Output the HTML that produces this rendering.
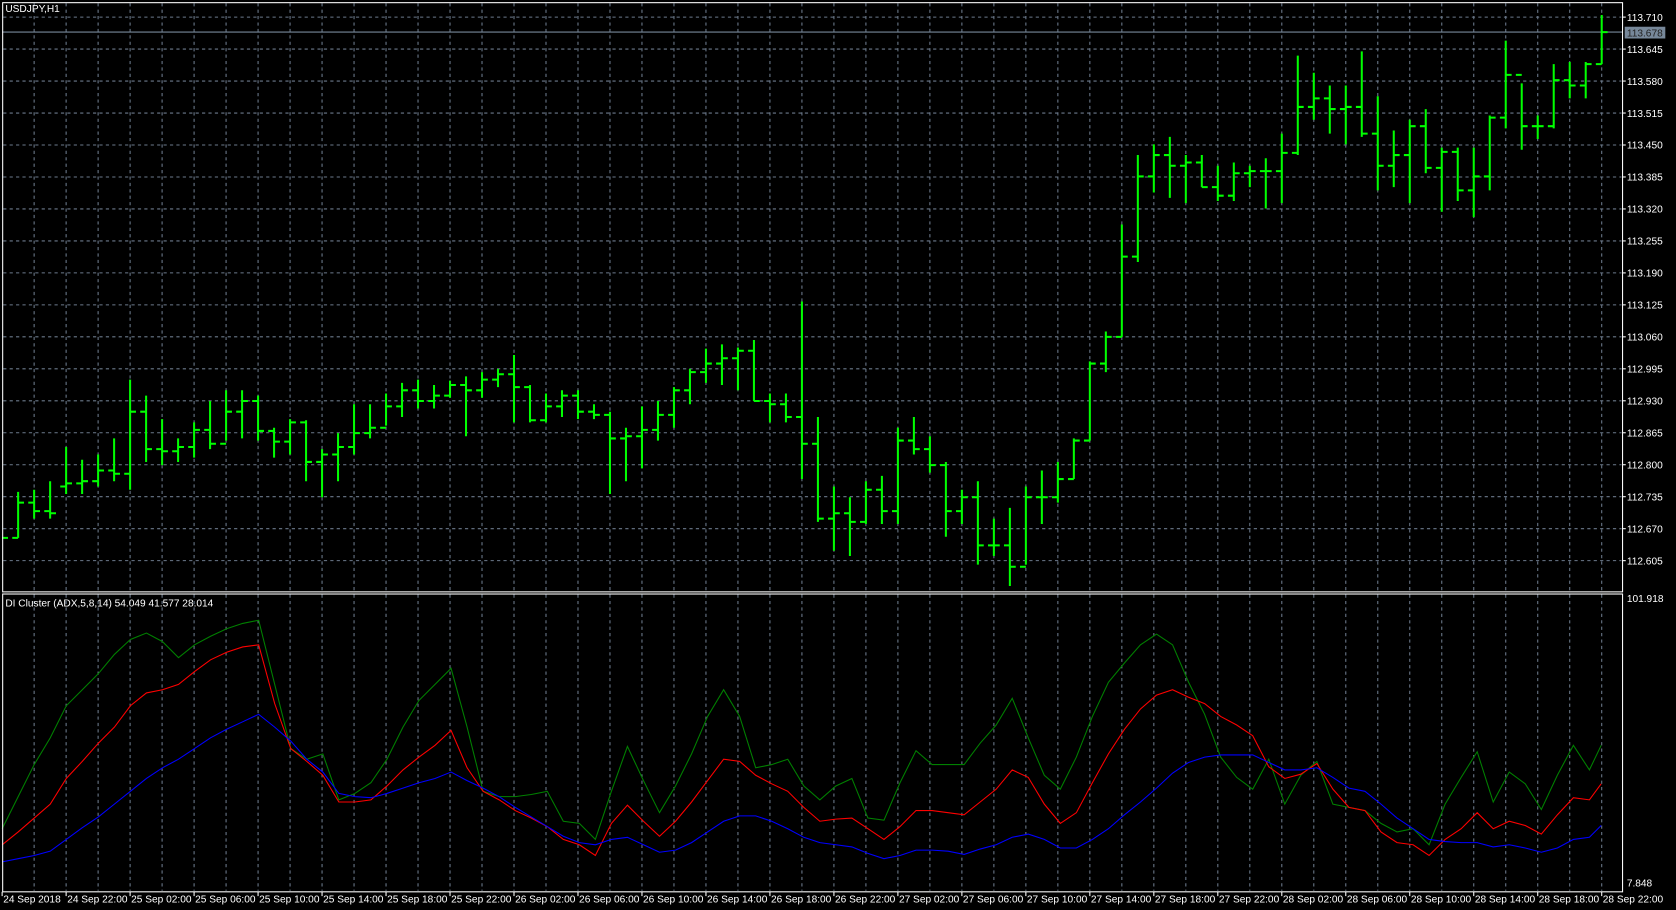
<!DOCTYPE html>
<html><head><meta charset="utf-8"><style>
html,body{margin:0;padding:0;background:#000;overflow:hidden}
svg{display:block}
text{font-family:"Liberation Sans",sans-serif;font-size:9.5px;fill:#fff}
</style></head><body>
<svg id="s" width="1676" height="910" viewBox="0 0 1568 851" preserveAspectRatio="none" xmlns="http://www.w3.org/2000/svg">
<rect width="1568" height="851" fill="#000"/>
<g id="grid" stroke="#6c7a8c" stroke-width="1" stroke-dasharray="3,3"></g>
<line x1="2" y1="30" x2="1518" y2="30" stroke="#77889a" stroke-width="1"/>
<g id="bars" stroke="#00ff00" stroke-width="1.9" fill="none"></g>
<polyline id="pg" fill="none" stroke="#008000" stroke-width="1"/>
<polyline id="pr" fill="none" stroke="#ff0000" stroke-width="1"/>
<polyline id="pb" fill="none" stroke="#0000ff" stroke-width="1"/>
<g stroke="#fff" stroke-width="1" fill="none">
<rect x="2.5" y="2.5" width="1515.5" height="551"/>
<rect x="2.5" y="555.5" width="1515.5" height="278.5"/>
</g>
<g id="labels"></g>
<text x="5" y="11">USDJPY,H1</text>
<text x="5" y="567">DI Cluster (ADX,5,8,14) 54.049 41.577 28.014</text>
<rect x="1520" y="25" width="38" height="11" fill="#77889a"/>
<text x="1522" y="34" fill="#000" style="fill:#222">113.678</text>
<text x="1522" y="563">101.918</text>
<text x="1522" y="829">7.848</text>
</svg>
<script>
var NS="http://www.w3.org/2000/svg";
function el(p,t,a,txt){var e=document.createElementNS(NS,t);for(var k in a)e.setAttribute(k,a[k]);if(txt)e.textContent=txt;p.appendChild(e);return e;}
var g=document.getElementById('grid'),L=document.getElementById('labels'),B=document.getElementById('bars');
var ps=[];for(var i=0;i<18;i++){var y=16+i*29.9;var p=(113.710-i*0.065).toFixed(3);
el(g,'line',{x1:3,y1:y,x2:1517,y2:y});
el(L,'line',{x1:1518,y1:y,x2:1521,y2:y,stroke:'#fff'});
el(L,'text',{x:1522,y:y+3.5},p);}
for(var k=1;k<51;k++){var x=2+k*29.93;el(g,'line',{x1:x,y1:3,x2:x,y2:553});el(g,'line',{x1:x,y1:556,x2:x,y2:833});}
var tl=["24 Sep 2018","24 Sep 22:00","25 Sep 02:00","25 Sep 06:00","25 Sep 10:00","25 Sep 14:00","25 Sep 18:00","25 Sep 22:00","26 Sep 02:00","26 Sep 06:00","26 Sep 10:00","26 Sep 14:00","26 Sep 18:00","26 Sep 22:00","27 Sep 02:00","27 Sep 06:00","27 Sep 10:00","27 Sep 14:00","27 Sep 18:00","27 Sep 22:00","28 Sep 02:00","28 Sep 06:00","28 Sep 10:00","28 Sep 14:00","28 Sep 18:00","28 Sep 22:00"];
for(var j=0;j<tl.length;j++){var x=(j==0?2:2+(j*4)*14.96-(j==1?0:0));if(j>0)x=2+(j*4)*14.965;el(L,'line',{x1:x,y1:834,x2:x,y2:838,stroke:'#fff'});el(L,'text',{x:x+1,y:844},tl[j]);}
var d=[[503,503,503,503],[460,503,503,470],[458,485,470,478],[450,485,478,480],[418,462,455,452],[430,462,452,450],[425,455,450,440],[410,450,440,443],[355,458,443,385],[370,432,385,420],[392,435,420,422],[410,432,422,418],[395,428,418,402],[375,420,402,415],[365,412,415,385],[365,410,385,375],[370,412,375,403],[400,428,403,413],[392,425,413,395],[393,450,395,432],[420,465,432,425],[405,450,425,418],[378,425,418,405],[378,410,405,400],[368,398,400,380],[358,390,380,365],[355,382,365,375],[360,382,375,370],[356,372,370,360],[352,408,360,365],[348,372,365,355],[345,362,355,350],[332,395,350,362],[360,395,362,393],[368,395,393,380],[365,390,380,370],[365,392,370,385],[378,392,385,388],[385,462,388,410],[400,450,410,408],[380,438,408,402],[375,412,402,388],[362,400,388,365],[345,378,365,348],[326,358,348,340],[322,360,340,335],[325,365,335,328],[318,375,328,375],[368,395,375,378],[368,395,378,390],[282,448,390,415],[390,488,415,485],[455,515,485,480],[465,520,480,488],[450,490,488,458],[445,490,458,478],[400,490,478,412],[390,425,412,420],[408,442,420,435],[432,502,435,478],[458,490,478,465],[450,528,465,510],[485,520,510,510],[475,548,510,530],[455,528,530,465],[440,490,465,465],[432,470,465,448],[410,448,448,412],[338,412,412,340],[310,348,340,315],[210,315,315,240],[145,245,240,165],[135,180,165,145],[128,185,145,155],[145,190,155,152],[145,175,152,175],[155,188,175,183],[152,188,183,162],[155,175,162,160],[148,195,160,160],[125,190,160,143],[52,145,143,100],[68,112,100,92],[80,125,92,102],[80,135,102,100],[48,128,100,125],[90,178,125,155],[122,175,155,145],[112,190,145,118],[102,162,118,157],[138,198,157,142],[138,188,142,178],[138,203,178,165],[108,178,165,110],[38,120,110,70],[78,140,70,118],[108,130,118,118],[60,120,118,75],[58,92,75,80],[58,92,80,60],[14,60,60,30]];
var path="";for(var i=0;i<d.length;i++){var x=2+i*14.965,b=d[i];if(i>0)path+="M"+x+" "+b[0]+"V"+b[1];path+="M"+Math.max(3,x-5.5)+" "+b[2]+"H"+x+"M"+x+" "+b[3]+"H"+Math.min(1517,x+5.5);}
el(B,'path',{d:path});
function pl(id,a){var s="";for(var i=0;i<a.length;i+=2)s+=a[i]+","+a[i+1]+" ";document.getElementById(id).setAttribute('points',s);}
pl('pg',[2,775,17,745,32,715,47,690,62,660,77,645,92,630,107,612,122,598,137,592,152,600,167,615,182,603,197,595,212,588,227,583,242,580,257,640,272,700,287,710,302,705,317,748,332,742,347,732,362,710,377,680,392,655,407,640,422,625,437,680,452,740,467,745,482,745,497,743,512,740,527,768,542,770,557,785,572,740,587,698,602,730,617,760,632,735,647,705,662,670,677,645,692,670,707,718,722,715,737,710,752,735,767,748,782,735,797,728,812,765,827,767,842,732,857,702,872,715,887,715,902,715,917,695,932,678,947,653,962,690,977,725,992,738,1007,708,1022,670,1037,638,1052,620,1067,603,1082,593,1097,603,1112,638,1127,668,1142,708,1157,727,1172,738,1187,710,1202,752,1217,725,1232,712,1247,752,1262,755,1277,758,1292,770,1307,778,1322,775,1337,790,1352,752,1367,727,1382,703,1397,750,1412,722,1427,733,1442,757,1457,725,1472,697,1487,720,1498,697]);
pl('pr',[2,790,17,778,32,765,47,752,62,728,77,712,92,695,107,680,122,660,137,648,152,645,167,640,182,628,197,617,212,610,227,605,242,603,257,658,272,700,287,712,302,725,317,750,332,750,347,748,362,735,377,720,392,708,407,697,422,683,437,718,452,740,467,748,482,758,497,765,512,773,527,785,542,790,557,800,572,770,587,753,602,768,617,782,632,768,647,750,662,730,677,710,692,712,707,725,722,733,737,740,752,755,767,768,782,766,797,765,812,775,827,785,842,773,857,758,872,758,887,760,902,762,917,750,932,738,947,720,962,727,977,752,992,770,1007,760,1022,732,1037,705,1052,682,1067,663,1082,650,1097,645,1112,652,1127,658,1142,670,1157,678,1172,688,1187,717,1202,728,1217,724,1232,714,1247,738,1262,755,1277,758,1292,778,1307,788,1322,790,1337,800,1352,785,1367,775,1382,760,1397,775,1412,768,1427,772,1442,780,1457,762,1472,746,1487,748,1498,733]);
pl('pb',[2,806,17,803,32,800,47,796,62,785,77,774,92,764,107,752,122,740,137,728,152,718,167,710,182,700,197,690,212,682,227,675,242,668,257,680,272,693,287,710,302,722,317,742,332,745,347,746,362,742,377,737,392,732,407,728,422,722,437,730,452,737,467,745,482,755,497,764,512,773,527,782,542,788,557,790,572,785,587,783,602,790,617,797,632,795,647,788,662,778,677,768,692,763,707,763,722,768,737,775,752,783,767,788,782,790,797,792,812,798,827,803,842,800,857,795,872,795,887,796,902,799,917,794,932,790,947,783,962,780,977,785,992,793,1007,793,1022,785,1037,775,1052,762,1067,750,1082,737,1097,723,1112,713,1127,708,1142,706,1157,706,1172,706,1187,713,1202,720,1217,720,1232,718,1247,727,1262,737,1277,740,1292,752,1307,765,1322,775,1337,785,1352,787,1367,788,1382,788,1397,792,1412,790,1427,793,1442,797,1457,793,1472,785,1487,783,1498,772]);
</script>
</body></html>
